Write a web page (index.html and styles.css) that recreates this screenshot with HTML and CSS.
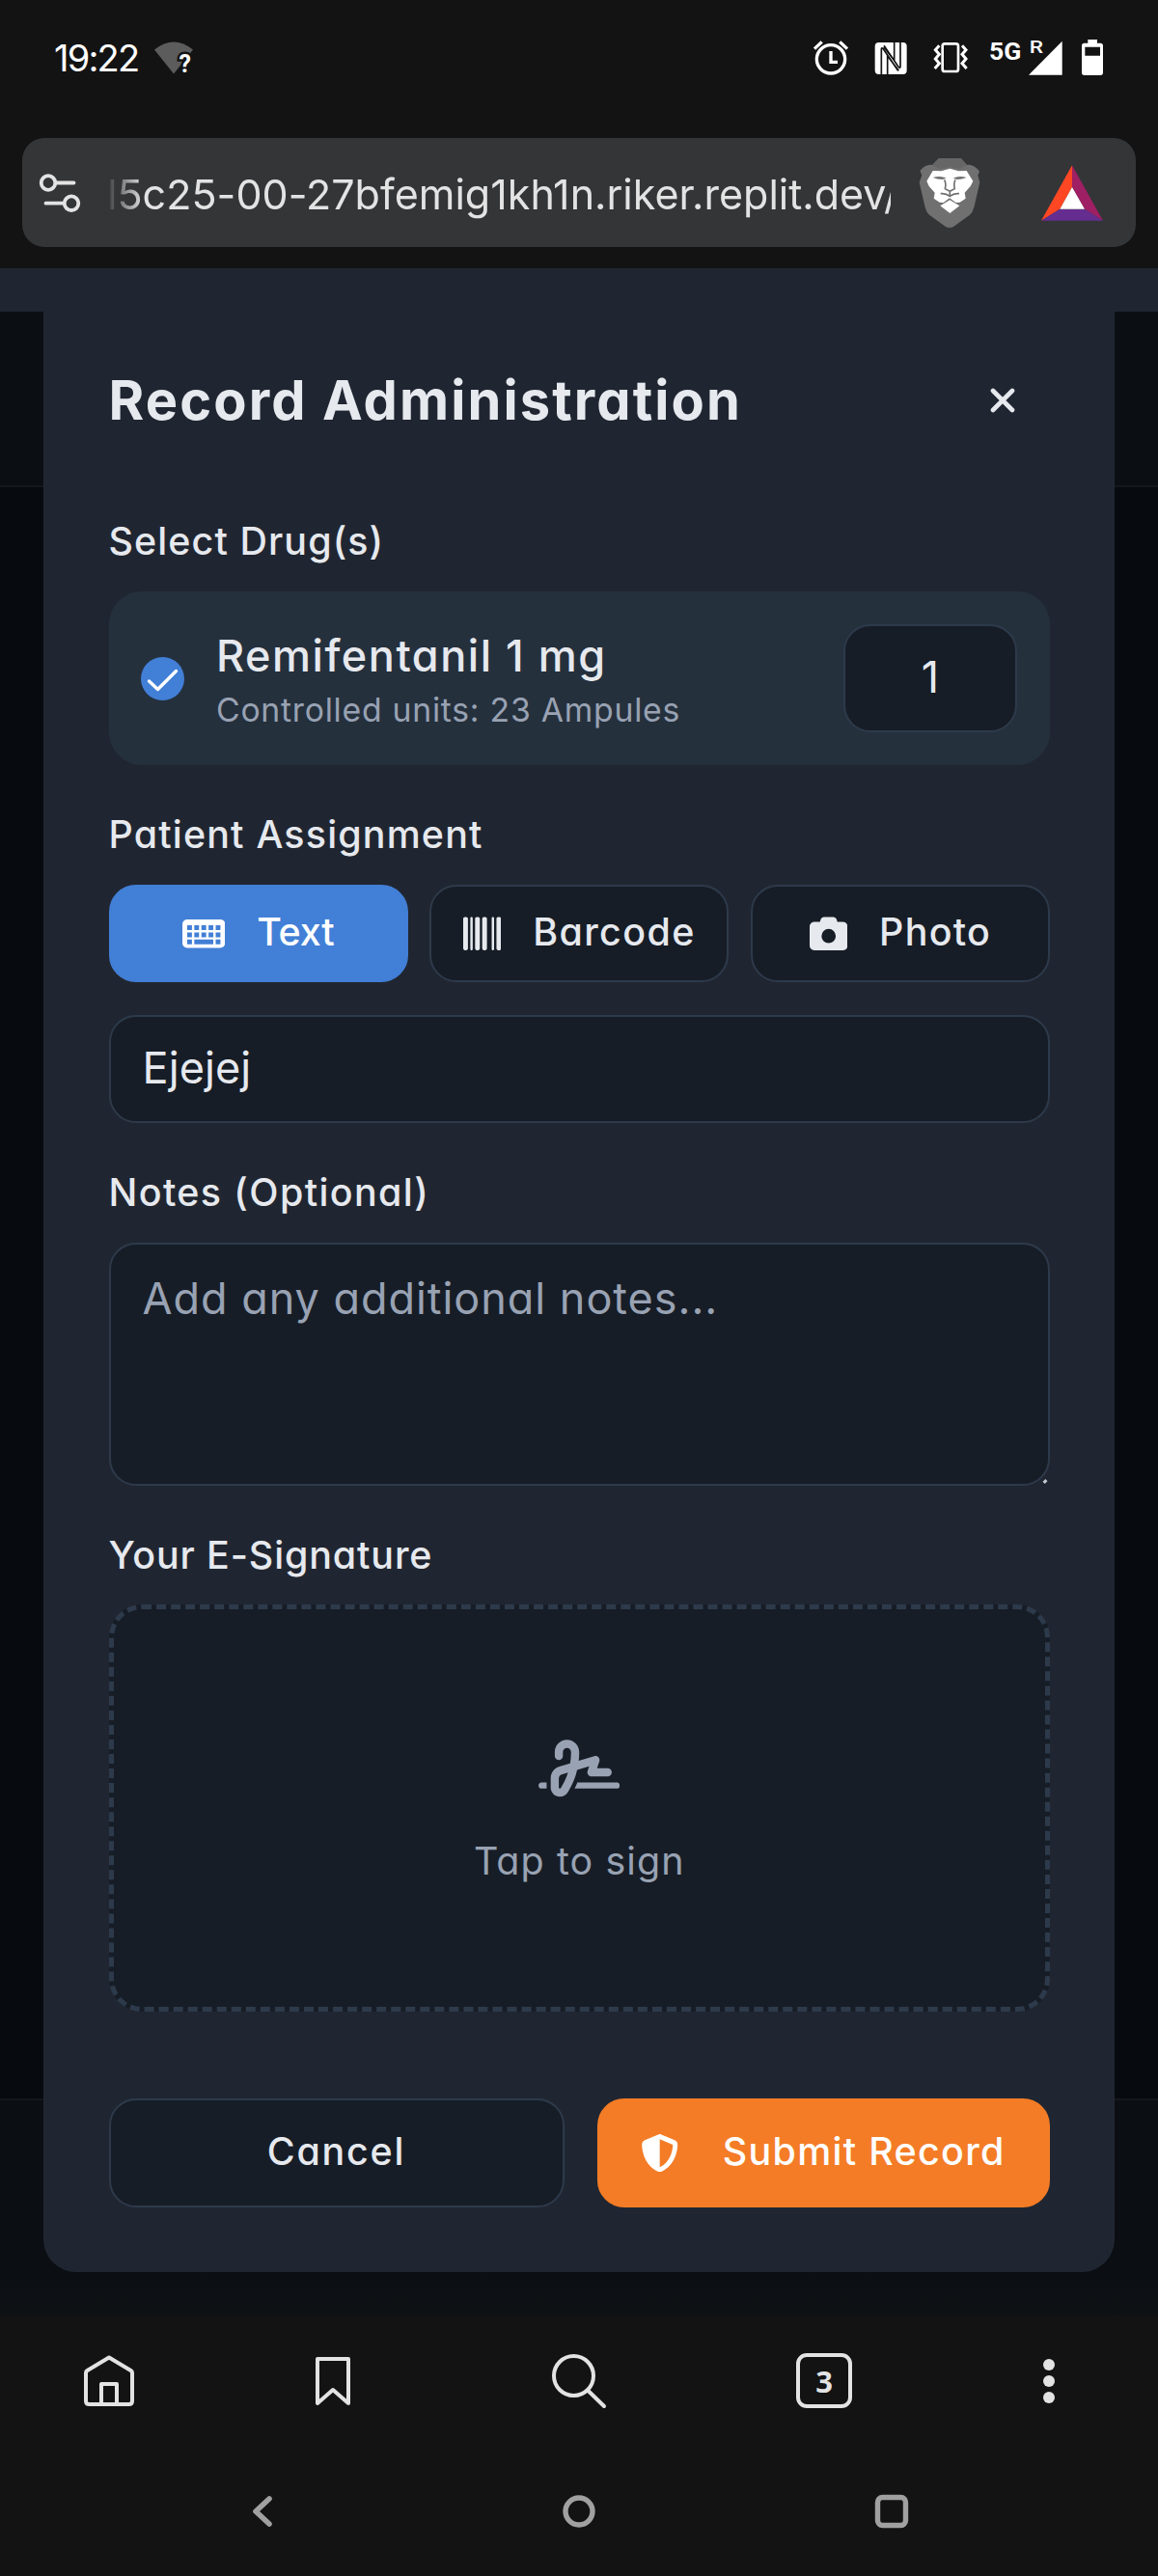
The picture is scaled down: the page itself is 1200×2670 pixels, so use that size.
FILE: index.html
```html
<!DOCTYPE html>
<html lang="en">
<head>
<meta charset="utf-8">
<title>Record Administration</title>
<link rel="stylesheet" href="styles.css">
</head>
<body>
<header class="status">
  <span class="clock">19:22</span>
  <svg class="wifi" width="50" height="44" viewBox="155 38 50 44">
    <path d="M180 76.5 160 51.5Q180 35.500 200 51.500Z" fill="#5c5c5c"/>
    <text x="185.500" y="75" font-family="Roboto" font-weight="700" font-size="25" fill="#fff" stroke="#131313" stroke-width="5" paint-order="stroke">?</text>
  </svg>
  <svg class="indicators" width="330" height="70" viewBox="0 0 990 210" fill="none" stroke="#fff">
    <circle cx="93" cy="94" r="44" stroke-width="10"/>
    <path d="M93 69v34h21" stroke-width="10"/>
    <path d="M42 62 65 40M121 40l23 22" stroke-width="10"/>
    <rect x="230" y="42" width="99" height="99" rx="12" fill="#fff" stroke="none"/>
    <path d="M250 144V64q0-8 6-2l46 68M309 38v78q0 8-6 2l-45-66M269 146V84l35 46M290 38v60l-32-42" stroke="#131313" stroke-width="5"/>
    <rect x="440" y="46" width="49" height="86" rx="7" stroke-width="8"/>
    <path d="M430 52l-12 13 12 14-12 14 12 14-14 16M501 52l12 13-12 14 12 14-12 14 14 16" stroke-width="9"/>
    <text x="585" y="95" font-family="Roboto" font-weight="700" font-size="77" textLength="100" lengthAdjust="spacingAndGlyphs" fill="#fff" stroke="none">5G</text>
    <text x="710" y="74" font-family="Roboto" font-weight="500" font-size="57" textLength="43" lengthAdjust="spacingAndGlyphs" fill="#fff" stroke="none">R</text>
    <path d="M708 143H812V38Z" fill="#fff" stroke="none"/>
    <path d="M892 33h29v11h10q8 0 8 8v84q0 8-8 8h-50q-8 0-8-8V52q0-8 8-8h11zM883 56v27h47V56z" fill="#fff" fill-rule="evenodd" stroke="none"/>
  </svg>
</header>

<div class="address">
  <svg class="tune" width="44" height="44" viewBox="40 177 44 44" fill="none" stroke="#e3e3e3" stroke-width="3.800" stroke-linecap="round">
    <circle cx="50" cy="188.500" r="7.300"/><path d="M58 188.500H76.500M47.500 209.700H66"/><circle cx="74" cy="209.700" r="7.300"/>
  </svg>
  <div class="url">l5c25-00-27bfemig1kh1n.riker.replit.dev/</div>
  <svg class="shield" width="64" height="74" viewBox="36 40 192 222">
    <path d="M98 44h70l18 20q20-4 39 20l-5 12 6 22-18 78q-4 16-14 24l-50 36q-12 6-24 0L70 220q-10-8-14-24L38 118l8-22-6-14q18-22 40-18z" fill="#707070"/>
    <path d="M98 44h70l18 20-22 12-32-6-32 6-22-12z" fill="#666"/>
    <path d="M80 82l26 1 27-8 27 8 25-1 20 32-8 16-18 20 3 18-18 12-12 1-20-14-19 14-12-1-18-12 3-18-18-20-7-16z" fill="#fff"/>
    <path d="M80 103q24-7 42 2l-12 4q-16 0-30-6zM185 103q-24-7-42 2l12 4q16 0 30-6z" fill="#707070"/>
    <path d="M116 110q6 12 2 28l15 8 15-8q-4-16 2-28M133 146v14" fill="none" stroke="#707070" stroke-width="5"/>
    <path d="M104 153q16-2 29 8 13-10 29-8" fill="none" stroke="#707070" stroke-width="5"/>
    <path d="M103 191l30-18 30 18-30 23z" fill="#fff"/>
  </svg>
  <svg class="triangle" width="66" height="60" viewBox="415 60 198 180">
    <path d="M514 64v68l-38 68-58 36z" fill="#ff4724"/>
    <path d="M514 64v68l39 68 57 36z" fill="#9e1f63"/>
    <path d="M418 236h192l-57-36h-77z" fill="#662d91"/>
    <path d="M514 132l39 68h-77z" fill="#fff"/>
  </svg>
</div>

<main class="page">
  <section class="modal">
    <div class="modal-head">
      <h1>Record Administration</h1>
      <svg width="26" height="26" viewBox="0 0 26 26" stroke="#e6e9ee" stroke-width="4.600" stroke-linecap="round"><path d="M3 3l20 20M23 3 3 23"/></svg>
    </div>

    <h2 class="t-drug">Select Drug(s)</h2>
    <div class="drug">
      <span class="check"><svg width="45" height="45" viewBox="0 0 45 45" fill="none" stroke="#fff" stroke-width="3.400" stroke-linecap="round" stroke-linejoin="round"><path d="M8.500 25 17.500 33.500 36.500 14.500"/></svg></span>
      <div class="drug-text">
        <div class="drug-name">Remifentanil 1 mg</div>
        <div class="drug-units">Controlled units: 23 Ampules</div>
      </div>
      <div class="field qty">1</div>
    </div>

    <h2 class="t-patient">Patient Assignment</h2>
    <div class="modes">
      <div class="btn active">
        <svg width="44.400" height="39.400" viewBox="0 0 576 512" fill="currentColor"><path fill-rule="evenodd" d="M64 64C28.700 64 0 92.700 0 128V384c0 35.300 28.700 64 64 64H512c35.300 0 64-28.700 64-64V128c0-35.300-28.700-64-64-64ZM64 144h64v64H64ZM160 144h64v64H160ZM256 144h64v64H256ZM352 144h64v64H352ZM448 144h64v64H448ZM64 240h64v64H64ZM160 240h64v64H160ZM256 240h64v64H256ZM352 240h64v64H352ZM448 240h64v64H448ZM64 336h64v64H64ZM160 336h256v64H160ZM448 336h64v64H448Z"/></svg>
        <span class="t-text">Text</span>
      </div>
      <div class="btn">
        <svg width="39.400" height="39.400" viewBox="0 0 512 512" fill="currentColor"><path d="M24 32C10.700 32 0 42.700 0 56V456c0 13.300 10.700 24 24 24H40c13.300 0 24-10.700 24-24V56c0-13.300-10.700-24-24-24H24zm88 0c-8.800 0-16 7.200-16 16V464c0 8.800 7.200 16 16 16s16-7.200 16-16V48c0-8.800-7.200-16-16-16zm72 0c-13.300 0-24 10.700-24 24V456c0 13.300 10.700 24 24 24h16c13.300 0 24-10.700 24-24V56c0-13.300-10.700-24-24-24H184zm96 0c-13.300 0-24 10.700-24 24V456c0 13.300 10.700 24 24 24h16c13.300 0 24-10.700 24-24V56c0-13.300-10.700-24-24-24H280zM448 56V456c0 13.300 10.700 24 24 24h16c13.300 0 24-10.700 24-24V56c0-13.300-10.700-24-24-24H472c-13.300 0-24 10.700-24 24zm-64-8V464c0 8.800 7.200 16 16 16s16-7.200 16-16V48c0-8.800-7.200-16-16-16s-16 7.200-16 16z"/></svg>
        <span class="t-barcode">Barcode</span>
      </div>
      <div class="btn">
        <svg width="39.400" height="39.400" viewBox="0 0 512 512" fill="currentColor"><path d="M149.100 64.800L138.700 96H64C28.700 96 0 124.700 0 160V416c0 35.300 28.700 64 64 64H448c35.300 0 64-28.700 64-64V160c0-35.300-28.700-64-64-64H373.300L362.900 64.800C356.400 45.200 338.100 32 317.400 32H194.600c-20.700 0-39 13.200-45.500 32.800zM256 192a96 96 0 1 1 0 192 96 96 0 1 1 0-192z"/></svg>
        <span class="t-photo">Photo</span>
      </div>
    </div>
    <div class="field patient">Ejejej</div>

    <h2 class="t-notes">Notes (Optional)</h2>
    <div class="field notes">Add any additional notes...<i class="grip"></i></div>

    <h2 class="t-sign">Your E-Signature</h2>
    <div class="pad">
      <svg width="84.400" height="67.500" viewBox="0 0 640 512" fill="currentColor"><path d="M192 128c0-17.700 14.300-32 32-32s32 14.300 32 32v7.800c0 27.700-2.400 55.300-7.100 82.500l-84.400 25.300c-40.600 12.200-68.400 49.600-68.400 92v71.900c0 40 32.500 72.500 72.500 72.500c26 0 50-13.900 62.900-36.500l13.900-24.300c26.800-47 46.500-97.700 58.400-150.500l94.400-28.300-12.500 37.500c-3.300 9.800-1.600 20.500 4.400 28.800s15.700 13.300 26 13.300H544c17.700 0 32-14.300 32-32s-14.300-32-32-32H460.400l18-53.900c3.800-11.300 .9-23.800-7.400-32.400s-20.700-11.800-32.200-8.400L316.400 198.100c2.400-20.700 3.600-41.400 3.600-62.300V128c0-53-43-96-96-96s-96 43-96 96v32c0 17.700 14.300 32 32 32s32-14.300 32-32V128zm-9.200 177l49-14.700c-10.400 33.800-24.500 66.400-42.100 97.200l-13.900 24.300c-1.500 2.600-4.300 4.300-7.400 4.300c-4.700 0-8.500-3.800-8.500-8.500V335.600c0-14.100 9.300-26.600 22.800-30.700zM24 368c-13.300 0-24 10.700-24 24s10.700 24 24 24H64.300c-.2-2.800-.3-5.600-.3-8.500V368H24zm592 48c13.300 0 24-10.700 24-24s-10.700-24-24-24H305.900c-6.700 16.300-14.200 32.300-22.300 48H616z"/></svg>
      <span>Tap to sign</span>
    </div>

    <div class="actions">
      <div class="btn cancel"><span>Cancel</span></div>
      <div class="btn submit">
        <svg width="39.400" height="39.400" viewBox="0 0 512 512" fill="currentColor"><path d="M256 0c4.600 0 9.200 1 13.400 2.900L457.700 82.800c22 9.300 38.400 31 38.300 57.200c-.5 99.200-41.300 280.700-213.600 363.200c-16.700 8-36.100 8-52.800 0C57.300 420.700 16.500 239.200 16 140c-.1-26.200 16.300-47.900 38.300-57.200L242.700 2.900C246.800 1 251.400 0 256 0zm0 66.800V444.800C394 378 431.100 230.100 432 141.400L256 66.800z"/></svg>
        <span>Submit Record</span>
      </div>
    </div>
  </section>
</main>

<nav class="toolbar">
  <svg width="64" height="64" viewBox="-32 -32 64 64" fill="none" stroke="#e3e3e3" stroke-width="4" stroke-linejoin="round"><path d="M-24-8.500Q-24-10-22.500-11L0-24.500 22.500-11Q24-10 24-8.500V20.500Q24 24 20.500 24H-20.500Q-24 24-24 20.500ZM-8 24V3H8V24"/></svg>
  <svg width="64" height="64" viewBox="-32 -32 64 64" fill="none" stroke="#e3e3e3" stroke-width="4" stroke-linejoin="round"><path d="M-16-23H16V23L0 9-16 23Z"/></svg>
  <svg width="64" height="64" viewBox="-32 -32 64 64" fill="none" stroke="#e3e3e3" stroke-width="4" stroke-linecap="round"><circle cx="-5.500" cy="-5.500" r="20.500"/><path d="M9 9.500 26 26"/></svg>
  <span class="tabs">3</span>
  <svg width="64" height="64" viewBox="-32 -32 64 64" fill="#e3e3e3"><circle cx="1" cy="-17" r="6"/><circle cx="1" cy="0" r="6"/><circle cx="1" cy="17" r="6"/></svg>
</nav>
<nav class="system">
  <svg width="40" height="40" viewBox="-20 -20 40 40" fill="none" stroke="#a0a0a0" stroke-width="5.600" stroke-linecap="round" stroke-linejoin="round"><path d="M7-13-7 0 7 13"/></svg>
  <svg width="40" height="40" viewBox="-20 -20 40 40" fill="none" stroke="#a0a0a0" stroke-width="5.400"><circle r="14"/></svg>
  <svg width="40" height="40" viewBox="-20 -20 40 40" fill="none" stroke="#a0a0a0" stroke-width="5.400"><rect x="-14.500" y="-14.500" width="29" height="29" rx="5"/></svg>
</nav>
</body>
</html>
```
FILE: styles.css
```css
* { box-sizing: border-box; }
body {
  margin: 0;
  width: 1200px;
  height: 2670px;
  display: flex;
  flex-direction: column;
  overflow: hidden;
  background: #131313;
  color: #e6e9ee;
  font-family: Inter, "Open Sans", sans-serif;
  font-feature-settings: "cv11";
}
svg { display: block; flex: none; }
h1, h2 { margin: 0; }

.status {
  height: 143px;
  padding: 30px 40px 0 56px;
  display: flex;
  align-items: flex-start;
}
.clock {
  width: 99px;
  font-size: 38px;
  line-height: 60px;
  letter-spacing: -1.79px;
  color: #fff;
}
.wifi { margin-top: 8px; }
.indicators { margin-left: auto; }

.address {
  height: 113px;
  margin: 0 23px 22px;
  padding-left: 17px;
  border-radius: 23px;
  background: #343537;
  display: flex;
  align-items: center;
}
.url {
  width: 810px;
  margin-left: 29px;
  padding-top: 3px;
  overflow: hidden;
  white-space: nowrap;
  text-indent: -2px;
  font-size: 43px;
  line-height: 70px;
  letter-spacing: .02px;
  color: #e3e3e3;
  mask-image: linear-gradient(90deg, rgba(0,0,0,.1) 0, #000 36px);
}
.shield { margin-left: 29px; }
.triangle { margin-left: 62px; }

.page {
  height: 2122px;
  padding: 0 45px;
  background: linear-gradient(
    #202631 45px,
    #0b0f13 45px, #0b0f13 225px,
    #14181d 225px, #14181d 227px,
    #070b0f 227px, #070b0f 1897px,
    #14181d 1897px, #14181d 1899px,
    #0b0e13 1899px, #0b0e13 2077px,
    #0e1215 2122px);
}
.modal {
  height: 2077px;
  padding: 92px 67px 67px 67.5px;
  border-radius: 0 0 34px 34px;
  background: #202631;
}
.modal-head {
  height: 90px;
  margin-bottom: 73px;
  padding-right: 36px;
  display: flex;
  align-items: center;
  justify-content: space-between;
}
h1 {
  font-size: 56px;
  font-weight: 700;
  line-height: 90px;
  letter-spacing: 2.1px;
}
h2 {
  margin-bottom: 24px;
  font-size: 39.4px;
  font-weight: 500;
  line-height: 56px;
}
.t-drug { letter-spacing: 1.1px; }
.t-patient { letter-spacing: 1.18px; }
.t-notes { letter-spacing: 1.4px; }
.t-sign { margin-bottom: 23px; letter-spacing: .88px; }

.drug {
  height: 180px;
  margin-bottom: 44px;
  padding: 34px 34px 34px 33px;
  border-radius: 34px;
  background: #25303d;
  display: flex;
  align-items: center;
}
.check {
  border-radius: 50%;
  background: #427fd6;
}
.drug-text { flex: 1; margin-left: 33.5px; }
.drug-name {
  font-size: 45px;
  font-weight: 500;
  line-height: 66px;
  letter-spacing: 1.54px;
}
.drug-units {
  font-size: 33.75px;
  line-height: 46px;
  letter-spacing: .74px;
  color: #98a2b3;
}
.field {
  border: 2px solid #2d3a4b;
  border-radius: 28px;
  background: #171d26;
  font-size: 45px;
}
.qty { width: 180px; height: 112px; text-align: center; line-height: 105px; }

.modes {
  height: 101px;
  margin-bottom: 34px;
  display: grid;
  grid-template-columns: repeat(3, 1fr);
  gap: 22.5px;
}
.btn {
  display: flex;
  align-items: center;
  justify-content: center;
  gap: 33px;
  border: 2px solid #2d3a4b;
  border-radius: 28px;
  background: #171d26;
  font-size: 39.4px;
  font-weight: 500;
}
.btn span { padding-bottom: 3px; }
.active { border-color: #427fd6; background: #427fd6; color: #fff; }
.t-text { letter-spacing: -.19px; }
.t-barcode { letter-spacing: 1.4px; }
.t-photo { letter-spacing: 1.3px; }
.patient {
  height: 112px;
  margin-bottom: 44px;
  padding-left: 33px;
  line-height: 105px;
  letter-spacing: .1px;
}
.notes {
  position: relative;
  height: 252px;
  margin-bottom: 44px;
  padding: 22px 33px;
  line-height: 67px;
  letter-spacing: .96px;
  color: #98a2b3;
}
.grip {
  position: absolute;
  right: 1px;
  bottom: 1px;
  width: 4px;
  height: 3px;
  background: #c4c8ce;
  transform: rotate(-45deg);
}
.pad {
  height: 422px;
  margin-bottom: 90px;
  padding-top: 8px;
  border: 5px dashed #2d3a4b;
  border-radius: 34px;
  background: #171d26;
  color: #98a2b3;
  display: flex;
  flex-direction: column;
  align-items: center;
  justify-content: center;
  gap: 34px;
  font-size: 39.4px;
  line-height: 56px;
  letter-spacing: 1.1px;
}
.actions {
  height: 113px;
  display: grid;
  grid-template-columns: 472px 469px;
  gap: 34px;
}
.cancel { letter-spacing: 1.8px; }
.submit {
  gap: 45px;
  border-color: #f47c26;
  background: #f47c26;
  color: #fff;
  letter-spacing: 1.32px;
}

.toolbar, .system {
  height: 135px;
  display: grid;
  align-items: center;
  justify-items: center;
}
.toolbar { grid-template-columns: 226px 238px 272px 236px 228px; }
.system { grid-template-columns: 544px 112px 536px; }
.tabs {
  width: 58px;
  height: 57px;
  border: 4px solid #e3e3e3;
  border-radius: 11px;
  text-align: center;
  font: 700 31px/51px "Open Sans", sans-serif;
  color: #e3e3e3;
}
```
